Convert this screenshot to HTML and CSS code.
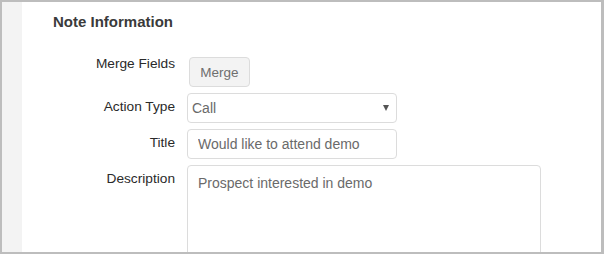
FILE: index.html
```html
<!DOCTYPE html>
<html>
<head>
<meta charset="utf-8">
<link rel="stylesheet" href="styles.css">
</head>
<body>
<div class="frame">
  <div class="strip"></div>
  <div class="main">
    <h2 class="heading">Note Information</h2>
    <div class="form">
      <label class="label label-top">Merge Fields</label>
      <div class="field"><button class="btn">Merge</button></div>

      <label class="label">Action Type</label>
      <div class="field">
        <div class="select-wrap">
          <select class="control select"><option>Call</option></select>
          <span class="arrow"></span>
        </div>
      </div>

      <label class="label">Title</label>
      <div class="field"><input class="control input" type="text" value="Would like to attend demo"></div>

      <label class="label">Description</label>
      <div class="field"><textarea class="control textarea">Prospect interested in demo</textarea></div>
    </div>
  </div>
</div>
</body>
</html>
```

FILE: styles.css
```css
* { box-sizing: border-box; }
html, body { margin: 0; padding: 0; background: #fff; }
body { font-family: "Liberation Sans", Arial, sans-serif; }

.frame {
  width: 604px;
  height: 254px;
  border-style: solid;
  border-color: #bdbdbd;
  border-width: 2px 3px 2px 2px;
  display: flex;
  overflow: hidden;
  background: #fff;
}

.strip {
  width: 20px;
  flex: none;
  background: #f3f3f3;
}

.main {
  flex: 1;
  padding: 11px 0 0 0;
}

.heading {
  margin: 0 0 26px 31px;
  font-size: 15px;
  line-height: 18px;
  font-weight: bold;
  color: #3a3a3a;
}

.form {
  display: grid;
  grid-template-columns: 153px 1fr;
  column-gap: 12px;
  row-gap: 6px;
}

.label {
  text-align: right;
  font-size: 13.7px;
  line-height: 17px;
  color: #2a2a2a;
  padding-top: 5px;
}

.label-top { padding-top: 0; margin-top: -2px; }

.field { display: flex; }

.btn {
  margin-left: 2px;
  width: 61px;
  height: 30px;
  background: #f3f3f3;
  border: 1px solid #dcdcdc;
  border-radius: 4px;
  font-family: "Liberation Sans", Arial, sans-serif;
  font-size: 13.5px;
  color: #6f6f6f;
  padding: 0;
}

.control {
  font-family: "Liberation Sans", Arial, sans-serif;
  font-size: 14px;
  color: #6a6a6a;
  border: 1px solid #dcdcdc;
  border-radius: 4px;
  background: #fff;
  outline: none;
}

.select-wrap {
  position: relative;
  width: 210px;
  height: 30px;
}

.select {
  width: 210px;
  height: 30px;
  padding: 0 20px 0 4px;
  -webkit-appearance: none;
  appearance: none;
}

.arrow {
  position: absolute;
  right: 8px;
  top: 12px;
  width: 0;
  height: 0;
  border-left: 3.5px solid transparent;
  border-right: 3.5px solid transparent;
  border-top: 6px solid #555;
}

.input {
  width: 210px;
  height: 30px;
  padding: 0 10px;
}

.textarea {
  width: 354px;
  height: 110px;
  padding: 9px 10px;
  line-height: 17px;
  resize: none;
}
```
